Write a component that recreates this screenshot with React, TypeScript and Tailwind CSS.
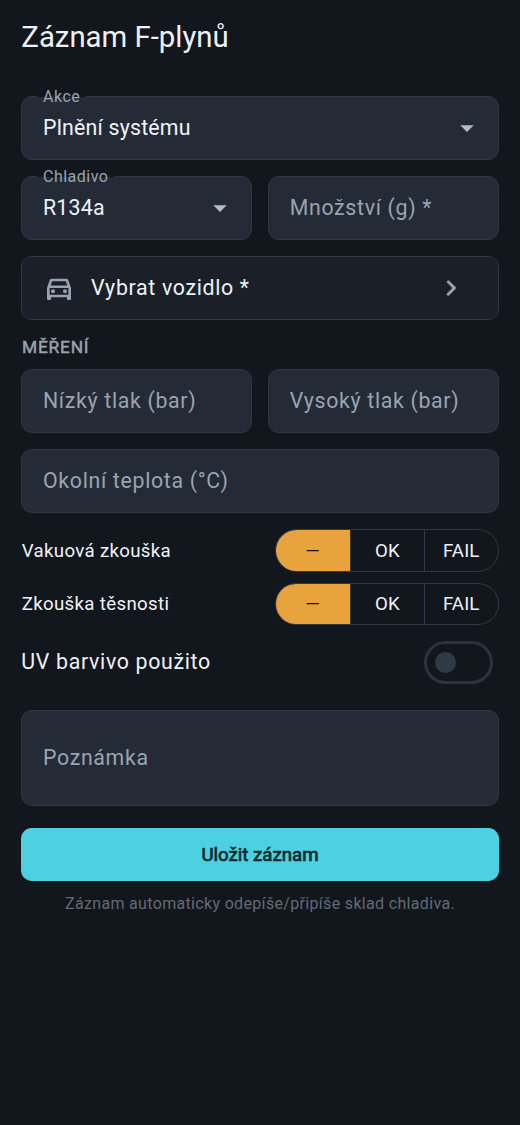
import type { ReactNode } from "react";
import { MdArrowDropDown, MdOutlineDirectionsCar } from "react-icons/md";

const BOX = "rounded-[10.67px] border-[1.33px] border-[#2e3743] bg-[#242b36]";

function SelectField({ label, value }: { label: string; value: string }) {
  return (
    <div className={`relative flex h-16 min-w-0 items-center justify-between pl-[20.67px] pr-[15px] ${BOX}`}>
      <span className="absolute -top-[10.5px] left-[15px] flex h-5 items-center px-[5.67px] text-[16px] leading-5 tracking-[0.5px] text-[#9aa4b1]">
        <span className="absolute inset-x-0 top-[9px] h-[3px] bg-[linear-gradient(#12161d_17%,#242b36_17%)]" />
        <span className="relative">{label}</span>
      </span>
      <span className="text-[21.33px] leading-7 tracking-[0.2px] text-[#eef2f6]">{value}</span>
      <MdArrowDropDown className="size-8 shrink-0 text-[#b3bdc7]" />
    </div>
  );
}

function TextField({ label, tall = false }: { label: string; tall?: boolean }) {
  return (
    <div className={`flex min-w-0 items-center px-[20.67px] ${tall ? "h-24" : "h-16"} ${BOX}`}>
      <span className="text-[21.33px] leading-7 tracking-[0.67px] text-[#9aa4b1]">{label}</span>
    </div>
  );
}

function Pair({ children }: { children: ReactNode }) {
  return <div className="grid grid-cols-2 gap-4">{children}</div>;
}

function TestRow({ label }: { label: string }) {
  return (
    <div className="flex h-[42.67px] items-center justify-between">
      <span className="pl-[0.4px] text-[18.67px] leading-6 tracking-[0.33px] text-[#eef2f6]">{label}</span>
      <div className="flex h-[42.67px] w-[223.6px] overflow-hidden rounded-full border-[1.33px] border-[#303945] text-[18.67px] tracking-[0.13px] text-[#eef2f6]">
        <div className="flex flex-1 items-center justify-center bg-[#e8a33d] pr-px">
          <span className="text-[#12161d]">—</span>
        </div>
        <div className="flex flex-1 items-center justify-center border-l-[1.33px] border-[#303945]">OK</div>
        <div className="flex flex-1 items-center justify-center border-l-[1.33px] border-[#303945]">FAIL</div>
      </div>
    </div>
  );
}

export default function App() {
  return (
    <div className="min-h-[1125px] w-[520px] bg-[#12161d] px-[21.33px] font-['Roboto',sans-serif]">
      <h1 className="pt-[19px] text-[29.33px] leading-[37px] text-[#eef2f6]">Záznam F-plynů</h1>
      <div className="mt-10 flex flex-col gap-4">
        <SelectField label="Akce" value="Plnění systému" />
        <Pair>
          <SelectField label="Chladivo" value="R134a" />
          <TextField label="Množství (g) *" />
        </Pair>
        <div className="flex h-16 items-center rounded-[10.67px] border-[1.33px] border-[#303945] bg-[#1b2028] pl-[20.67px] pr-[31px]">
          <MdOutlineDirectionsCar className="size-8 text-[#9aa4b1]" />
          <span className="ml-4 flex-1 text-[21.33px] leading-7 tracking-[0.67px] text-[#eef2f6]">Vybrat vozidlo *</span>
          <svg viewBox="0 0 24 24" className="size-8 fill-[#9aa4b1] stroke-[#9aa4b1] stroke-[0.3]">
            <path d="M9.29 6.71a1 1 0 0 0 0 1.41L13.17 12l-3.88 3.88a1 1 0 1 0 1.41 1.41l4.59-4.59a1 1 0 0 0 0-1.41L10.7 6.7a1 1 0 0 0-1.41.01z" />
          </svg>
        </div>
      </div>
      <h2 className="mt-4 pl-[0.67px] text-[17.33px] font-normal leading-[22px] tracking-[0.8px] text-[#9aa4b1] [-webkit-text-stroke:0.5px_#9aa4b1]">
        MĚŘENÍ
      </h2>
      <div className="mt-[11.4px] flex flex-col gap-4">
        <Pair>
          <TextField label="Nízký tlak (bar)" />
          <TextField label="Vysoký tlak (bar)" />
        </Pair>
        <TextField label="Okolní teplota (°C)" />
      </div>
      <div className="mt-4 flex flex-col gap-[10.67px]">
        <TestRow label="Vakuová zkouška" />
        <TestRow label="Zkouška těsnosti" />
      </div>
      <div className="mt-4 flex h-[42.67px] items-center justify-between pr-[5.33px]">
        <span className="pb-px text-[21.33px] leading-7 tracking-[0.67px] text-[#eef2f6]">UV barvivo použito</span>
        <div className="flex h-[42.67px] w-[69.33px] items-center rounded-full border-[3px] border-[#2b333f] pl-[7.67px]">
          <div className="size-[21.33px] rounded-full bg-[#303a47]" />
        </div>
      </div>
      <div className="mt-[26px] flex flex-col">
        <TextField label="Poznámka" tall />
      </div>
      <button className="mt-[21.6px] flex h-[53.33px] w-full items-center justify-center rounded-[10.67px] bg-[#4dd0e1] pt-px text-[18.67px] font-normal text-[#0d2a30] [-webkit-text-stroke:0.7px_#0d2a30]">
        Uložit záznam
      </button>
      <p className="mt-[11.9px] text-center text-[16px] leading-[22px] tracking-[0.33px] text-[#626a75]">
        Záznam automaticky odepíše/připíše sklad chladiva.
      </p>
    </div>
  );
}
